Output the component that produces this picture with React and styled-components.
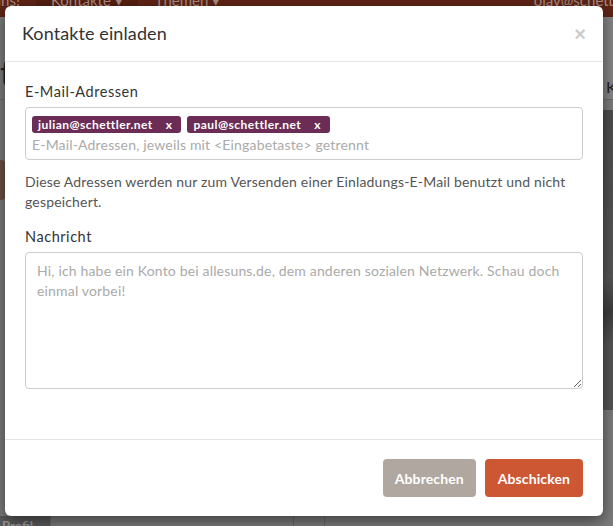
import React from 'react';
import styled, { createGlobalStyle } from 'styled-components';

const GlobalStyle = createGlobalStyle`
  html, body {
    margin: 0;
    padding: 0;
    height: 100%;
  }
  body {
    font-family: Lato, "Liberation Sans", sans-serif;
    background: #7c7c7c;
    overflow: hidden;
  }
  #root {
    height: 100%;
  }
`;

/* dimmed page behind the dialog */

const Page = styled.div`
  position: relative;
  height: 526px;
  display: flex;
  flex-direction: column;
  overflow: hidden;
`;

const NavBar = styled.nav`
  height: 17px;
  flex-shrink: 0;
  background: #5e2415;
  display: flex;
  overflow: hidden;
  color: #a98b82;
  font-size: 15px;
`;

const Brand = styled.div`
  width: 20px;
  flex-shrink: 0;
  padding-right: 16px;
  margin-top: -10px;
  line-height: 20px;
  height: 40px;
  display: flex;
  justify-content: flex-end;
  white-space: nowrap;
  overflow: hidden;
`;

const NavItem = styled.div`
  flex-shrink: 0;
  padding: 0 ${(p) => p.$pad}px;
  margin-top: -10px;
  line-height: 20px;
  height: 40px;
  background: ${(p) => (p.$active ? '#551f11' : 'transparent')};
  white-space: nowrap;
`;

const UserItem = styled(NavItem)`
  margin-left: auto;
  margin-right: -42px;
`;

const Content = styled.div`
  flex: 1;
  display: flex;
`;

const Main = styled.div`
  flex: 1;
  display: flex;
  flex-direction: column;
`;

const MainHead = styled.div`
  height: 82px;
  border-bottom: 1px solid #6e6e6e;
  font-size: 34px;
  color: #222;
  line-height: 112px;
  overflow: hidden;
`;

const Photo = styled.div`
  height: 40px;
  margin-top: 60px;
  width: 8px;
  background: #6a5040;
  border-radius: 0 20px 20px 0;
`;

const MainRest = styled.div`
  flex: 1;
`;

const Tabs = styled.div`
  height: 10px;
  display: flex;
`;

const Tab = styled.div`
  width: ${(p) => p.$w}px;
  background: ${(p) => p.$bg};
  border-right: 1px solid #6a6a6a;
  color: #9a9a9a;
  font-size: 13px;
  font-weight: 700;
  line-height: 20px;
  padding-left: 2px;
  overflow: hidden;
`;

const Aside = styled.aside`
  width: 90px;
  display: flex;
  flex-direction: column;
`;

const AsideHead = styled.div`
  height: 82px;
  border-bottom: 1px solid #6e6e6e;
  background: #858585;
  padding-left: 83px;
  color: #222;
  font-size: 16px;
  line-height: 140px;
  overflow: hidden;
  white-space: nowrap;
`;

const AsideImage = styled.div`
  height: 300px;
  margin-top: 10px;
  background: linear-gradient(160deg, #4c4c4c 0%, #565656 60%, #3e3e3e 70%, #555 80%);
`;

/* dialog */

const Modal = styled.div`
  position: absolute;
  left: 5px;
  top: 6px;
  width: 598px;
  background: #fff;
  border-radius: 6px;
  box-shadow: 0 5px 15px rgba(0, 0, 0, 0.5);
  color: #333;
  font-size: 14px;
  letter-spacing: 0.17px;
`;

const Header = styled.div`
  display: flex;
  align-items: center;
  justify-content: space-between;
  padding: 15px 17px 15px 17px;
  border-bottom: 1px solid #e5e5e5;
`;

const Title = styled.h4`
  margin: 0;
  font-size: 18px;
  font-weight: 400;
  line-height: 25px;
  letter-spacing: 0.1px;
  color: #333;
`;

const Close = styled.button`
  border: 0;
  background: none;
  padding: 0;
  font-family: "Liberation Sans", sans-serif;
  font-size: 20px;
  font-weight: 700;
  line-height: 1;
  color: #000;
  opacity: 0.2;
  cursor: pointer;
`;

const Body = styled.div`
  padding: 20px 20px 50px;
`;

const Group = styled.div`
  & + & {
    margin-top: 15px;
  }
`;

const Label = styled.label`
  display: block;
  margin-bottom: 5px;
  font-size: 14.5px;
  line-height: 20px;
  letter-spacing: 0.55px;
`;

const TagBox = styled.div`
  border: 1px solid #ccc;
  border-radius: 4px;
  padding: 8px 6px 4px;
`;

const TagRow = styled.div`
  display: flex;
  gap: 6px;
  margin-bottom: 2px;
`;

const Tag = styled.span`
  display: inline-flex;
  align-items: center;
  gap: 13px;
  height: 17px;
  padding: 0 9px 0 6px;
  background: #6b2d55;
  color: #fff;
  font-size: 12px;
  font-weight: 700;
  letter-spacing: 0.45px;
  border-radius: 3px;
`;

const TagInput = styled.input`
  display: block;
  width: 100%;
  border: 0;
  outline: 0;
  padding: 0;
  font: inherit;
  letter-spacing: inherit;
  line-height: 20px;
  height: 20px;
  color: #333;
  &::placeholder {
    color: #aaa;
  }
`;

const Help = styled.p`
  margin: 12px 0 0;
  line-height: 20px;
  color: #555;
`;

const TextArea = styled.textarea`
  display: block;
  box-sizing: border-box;
  width: 100%;
  height: 137px;
  border: 1px solid #ccc;
  border-radius: 4px;
  padding: 8px 11px;
  font: inherit;
  letter-spacing: inherit;
  line-height: 20px;
  color: #333;
  &::placeholder {
    color: #aaa;
  }
`;

const Footer = styled.div`
  display: flex;
  justify-content: flex-end;
  gap: 9px;
  padding: 19px 20px;
  border-top: 1px solid #e5e5e5;
`;

const Button = styled.button`
  height: 38px;
  padding: 0 ${(p) => (p.$primary ? 13 : 12)}px;
  border: 0;
  border-radius: 4px;
  background: ${(p) => (p.$primary ? '#cd5733' : '#b0a8a0')};
  color: #fff;
  font-family: inherit;
  font-size: 14px;
  font-weight: 700;
  letter-spacing: 0.1px;
  cursor: pointer;
`;

const emails = ['julian@schettler.net', 'paul@schettler.net'];

export default function App() {
  return (
    <>
      <GlobalStyle />
      <Page>
        <NavBar>
          <Brand>
            <span>allesuns!</span>
          </Brand>
          <NavItem $active $pad={15}>Kontakte ▾</NavItem>
          <NavItem $pad={17}>Themen ▾</NavItem>
          <UserItem $pad={0}>olav@schettler.net</UserItem>
        </NavBar>
        <Content>
          <Main>
            <MainHead>t</MainHead>
            <Photo />
            <MainRest />
            <Tabs>
              <Tab $w={48} $bg="#5b5b5b">Profil</Tab>
              <Tab $w={240} $bg="#7c7c7c" />
              <Tab $w={28} $bg="#7c7c7c" />
            </Tabs>
          </Main>
          <Aside>
            <AsideHead>Kontakte</AsideHead>
            <AsideImage />
          </Aside>
        </Content>

        <Modal role="dialog">
          <Header>
            <Title>Kontakte einladen</Title>
            <Close aria-label="Schließen">×</Close>
          </Header>
          <Body>
            <Group>
              <Label>E-Mail-Adressen</Label>
              <TagBox>
                <TagRow>
                  {emails.map((e) => (
                    <Tag key={e}>
                      {e}
                      <span>x</span>
                    </Tag>
                  ))}
                </TagRow>
                <TagInput placeholder="E-Mail-Adressen, jeweils mit <Eingabetaste> getrennt" />
              </TagBox>
              <Help>
                Diese Adressen werden nur zum Versenden einer Einladungs-E-Mail benutzt und nicht gespeichert.
              </Help>
            </Group>
            <Group>
              <Label>Nachricht</Label>
              <TextArea placeholder="Hi, ich habe ein Konto bei allesuns.de, dem anderen sozialen Netzwerk. Schau doch einmal vorbei!" />
            </Group>
          </Body>
          <Footer>
            <Button>Abbrechen</Button>
            <Button $primary>Abschicken</Button>
          </Footer>
        </Modal>
      </Page>
    </>
  );
}
